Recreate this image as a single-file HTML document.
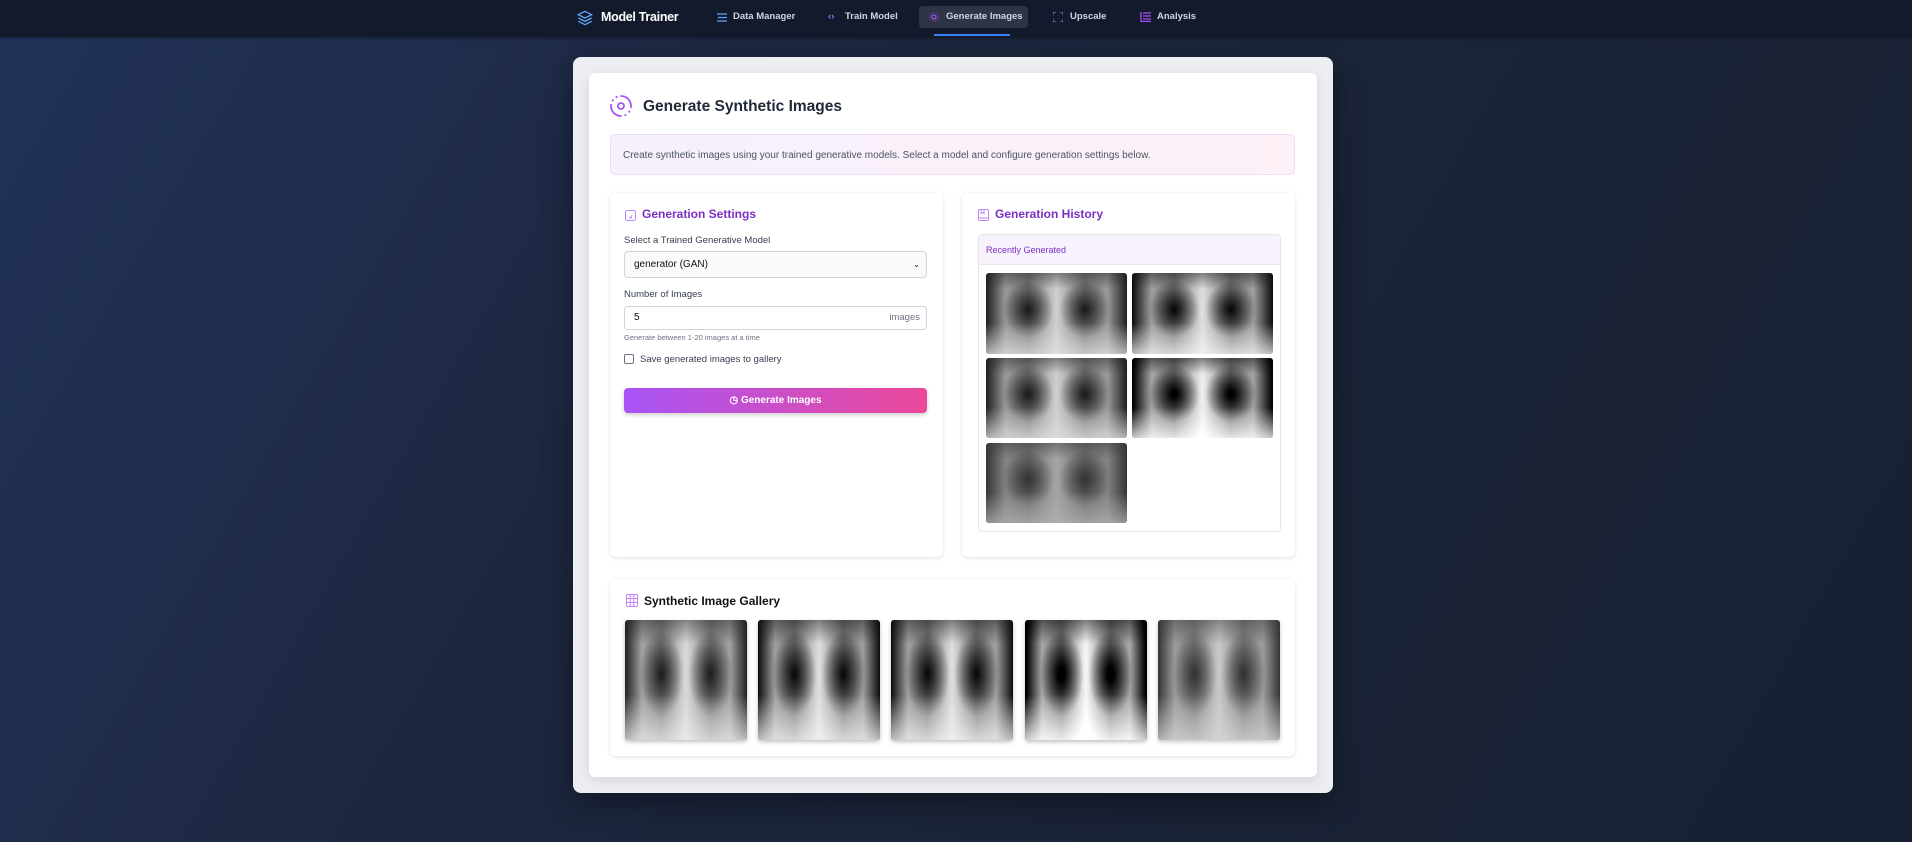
<!DOCTYPE html>
<html><head><meta charset="utf-8"><style>
*{box-sizing:border-box;margin:0;padding:0}
body{width:1912px;height:842px;overflow:hidden;font-family:"Liberation Sans",sans-serif;background:linear-gradient(120deg,#22335a 0%,#1d2740 35%,#1a2235 70%,#182033 100%);position:relative}
.nav{position:absolute;left:0;top:0;width:1912px;height:37px;background:#131a2b;box-shadow:0 1px 3px rgba(0,0,0,.4)}
.nav .it{position:absolute;top:3px;height:34px;line-height:28px;font-size:9.5px;color:#cfd5e0;font-weight:bold;white-space:nowrap}
.abs{position:absolute}
.outer{position:absolute;left:573px;top:57px;width:760px;height:736px;background:#eceef1;border-radius:8px;box-shadow:0 10px 30px rgba(0,0,0,.4)}
.inner{position:absolute;left:589px;top:73px;width:728px;height:704px;background:#fff;border-radius:6px;box-shadow:0 4px 12px rgba(0,0,0,.1)}
.card{position:absolute;background:#fff;border-radius:6px;box-shadow:0 1px 4px rgba(0,0,0,.12)}
.h{font-size:12px;font-weight:bold;color:#7c2fc4}
.lbl{font-size:9.5px;color:#374151}
.xr{position:absolute;border-radius:3px;background:
radial-gradient(ellipse 18% 36% at 30% 45%,rgba(15,15,15,.9),rgba(40,40,40,0) 100%),
radial-gradient(ellipse 18% 36% at 70% 45%,rgba(15,15,15,.9),rgba(40,40,40,0) 100%),
linear-gradient(90deg,#1e1e1e 0%,#9a9a9a 14%,#7a7a7a 30%,#cfcfcf 50%,#7a7a7a 70%,#9a9a9a 86%,#1e1e1e 100%);}
.xr::after{content:"";position:absolute;inset:0;border-radius:3px;background:linear-gradient(180deg,rgba(30,30,30,.45) 0%,rgba(0,0,0,0) 20%,rgba(255,255,255,0) 62%,rgba(225,225,225,.75) 100%)}
.g{box-shadow:0 2px 4px rgba(0,0,0,.25)}
</style></head><body>
<div class="nav">
 <svg class="abs" style="left:577px;top:9px" width="16" height="18" viewBox="0 0 24 24" fill="none" stroke="#60a5fa" stroke-width="2"><path d="M12 2 2 7l10 5 10-5z"/><path d="M2 12l10 5 10-5"/><path d="M2 17l10 5 10-5"/></svg>
 <div class="it" style="left:601px;font-size:12.5px;color:#fff;letter-spacing:-.3px">Model Trainer</div>
 <svg class="abs" style="left:717px;top:13px" width="10" height="9" viewBox="0 0 10 9"><path d="M0 1h10M1 4.5h9M0 8h10" stroke="#60a5fa" stroke-width="1.3"/></svg>
 <div class="it" style="left:733px">Data Manager</div>
 <div class="it" style="left:828px;color:#818cf8">‹›</div>
 <div class="it" style="left:845px">Train Model</div>
 <div class="abs" style="left:919px;top:6px;width:109px;height:22px;background:#2c3445;border-radius:4px"></div>
 <div class="abs" style="left:934px;top:34px;width:76px;height:2px;background:#3b82f6"></div>
 <svg class="abs" style="left:929px;top:12px" width="10" height="10" viewBox="0 0 10 10"><circle cx="5" cy="5" r="2" fill="none" stroke="#a855f7" stroke-width="1.2"/><circle cx="5" cy="5" r="4.3" fill="none" stroke="#a855f7" stroke-width=".8" stroke-dasharray="1 1.5"/></svg>
 <div class="it" style="left:946px">Generate Images</div>
 <svg class="abs" style="left:1053px;top:12px" width="10" height="10" viewBox="0 0 10 10" fill="none" stroke="#60a5fa" stroke-width="1"><path d="M0 3V0h3M7 0h3v3M10 7v3H7M3 10H0V7"/></svg>
 <div class="it" style="left:1070px">Upscale</div>
 <svg class="abs" style="left:1140px;top:12px" width="11" height="10" viewBox="0 0 11 10" stroke="#a855f7" stroke-width="1.3"><path d="M1 0v10M3 1h8M3 4h8M3 7h8M1 9.5h10"/></svg>
 <div class="it" style="left:1157px">Analysis</div>
</div>
<div class="outer"></div>
<div class="inner"></div>
<svg class="abs" style="left:609px;top:94px" width="24" height="24" viewBox="0 0 24 24" fill="none" stroke="#a855f7" stroke-width="1.8"><circle cx="12" cy="12" r="3"/><path d="M12 2a10 10 0 0 1 10 10M12 22A10 10 0 0 1 2 12" /><path d="M22 12a10 10 0 0 1-10 10M2 12A10 10 0 0 1 12 2" stroke-dasharray="2 3"/></svg>
<div class="abs" style="left:643px;top:98px;font-size:15.5px;font-weight:bold;color:#1f2937">Generate Synthetic Images</div>
<div class="abs" style="left:610px;top:134px;width:685px;height:41px;border:1px solid #ecdcf5;border-radius:5px;background:linear-gradient(90deg,#f6f0fd,#fdf0f7)"></div>
<div class="abs" style="left:623px;top:150px;font-size:10px;color:#4b5563">Create synthetic images using your trained generative models. Select a model and configure generation settings below.</div>

<div class="card" style="left:610px;top:193px;width:333px;height:364px"></div>
<svg class="abs" style="left:625px;top:209px" width="11" height="12" viewBox="0 0 11 12" fill="none" stroke="#c084fc" stroke-width="1"><rect x=".5" y="1.5" width="10" height="10" rx="2"/><path d="M4 8l2 1 1-3"/></svg>
<div class="abs h" style="left:642px;top:207px">Generation Settings</div>
<div class="abs lbl" style="left:624px;top:235px">Select a Trained Generative Model</div>
<div class="abs" style="left:624px;top:251px;width:303px;height:27px;border:1px solid #d1d5db;border-radius:4px;background:#f9fafb;font-size:10px;line-height:25px;padding-left:9px;color:#111">generator (GAN)<span style="position:absolute;right:6px;font-size:8px">⌄</span></div>
<div class="abs lbl" style="left:624px;top:289px">Number of Images</div>
<div class="abs" style="left:624px;top:306px;width:303px;height:24px;border:1px solid #d1d5db;border-radius:4px;background:#fff;font-size:10px;line-height:22px;padding-left:9px;color:#111">5<span style="position:absolute;right:6px;color:#6b7280;font-size:9.5px">images</span></div>
<div class="abs" style="left:624px;top:333px;font-size:7.5px;color:#6b7280">Generate between 1-20 images at a time</div>
<div class="abs" style="left:624px;top:354px;width:10px;height:10px;border:1px solid #6b7280;border-radius:2px"></div>
<div class="abs lbl" style="left:640px;top:354px">Save generated images to gallery</div>
<div class="abs" style="left:624px;top:388px;width:303px;height:25px;border-radius:4px;background:linear-gradient(90deg,#a855f7,#ec4899);box-shadow:0 2px 4px rgba(0,0,0,.2);color:#fff;font-size:10px;font-weight:bold;text-align:center;line-height:25px">◷ Generate Images</div>

<div class="card" style="left:962px;top:193px;width:333px;height:364px"></div>
<svg class="abs" style="left:978px;top:209px" width="11" height="12" viewBox="0 0 11 12" fill="none" stroke="#c084fc" stroke-width="1"><rect x=".5" y=".5" width="10" height="11" rx="1"/><path d="M3 .5v4l1.5-1 1.5 1v-4M.5 9h10"/></svg>
<div class="abs h" style="left:995px;top:207px">Generation History</div>
<div class="abs" style="left:978px;top:234px;width:303px;height:298px;border:1px solid #e5e7eb;border-radius:4px;background:#fff"></div>
<div class="abs" style="left:979px;top:235px;width:301px;height:30px;background:#f8f2fd;border-bottom:1px solid #e5e7eb;border-radius:4px 4px 0 0;font-size:9px;color:#7c2fc4;line-height:30px;padding-left:7px">Recently Generated</div>
<div class="xr" style="left:986px;top:273px;width:141px;height:81px"></div>
<div class="xr" style="left:1132px;top:273px;width:141px;height:81px;filter:contrast(1.2)"></div>
<div class="xr" style="left:986px;top:358px;width:141px;height:80px"></div>
<div class="xr" style="left:1132px;top:358px;width:141px;height:80px;filter:contrast(1.4)"></div>
<div class="xr" style="left:986px;top:443px;width:141px;height:80px;filter:contrast(.7) brightness(.9)"></div>

<div class="card" style="left:610px;top:579px;width:685px;height:177px"></div>
<svg class="abs" style="left:626px;top:594px" width="12" height="13" viewBox="0 0 12 13" fill="none" stroke="#c084fc" stroke-width="1"><rect x=".5" y=".5" width="11" height="12" rx="1"/><path d="M4.2 .5v12M7.8 .5v12M.5 4.5h11M.5 8.5h11"/></svg>
<div class="abs" style="left:644px;top:594px;font-size:12px;font-weight:bold;color:#111">Synthetic Image Gallery</div>
<div class="xr g" style="left:625px;top:620px;width:122px;height:120px;filter:brightness(1.05)"></div>
<div class="xr g" style="left:758px;top:620px;width:122px;height:120px;filter:contrast(1.2)"></div>
<div class="xr g" style="left:891px;top:620px;width:122px;height:120px;filter:contrast(1.2)"></div>
<div class="xr g" style="left:1025px;top:620px;width:122px;height:120px;filter:contrast(1.5)"></div>
<div class="xr g" style="left:1158px;top:620px;width:122px;height:120px;filter:contrast(.8) brightness(1.05)"></div>
</body></html>
